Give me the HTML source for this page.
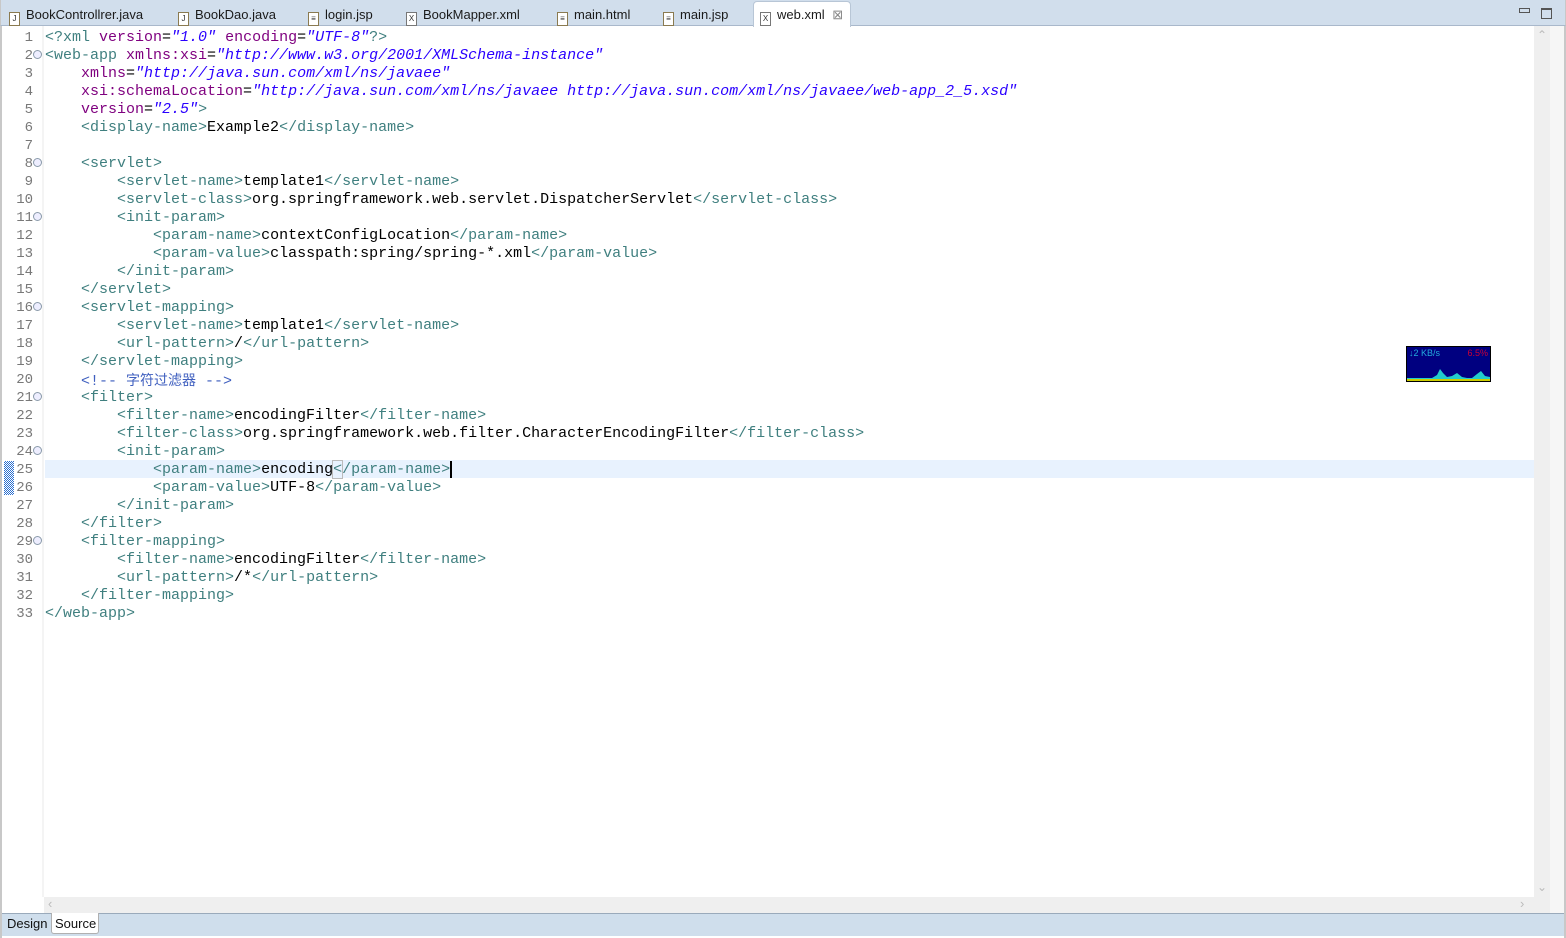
<!DOCTYPE html><html><head><meta charset="utf-8"><style>
body{margin:0;width:1566px;height:938px;background:#fff;position:relative;overflow:hidden;font-family:"Liberation Sans","Microsoft YaHei",sans-serif}
#tabs{position:absolute;left:0;top:0;width:1564px;height:25px;background:#d1deec;border-bottom:1px solid #a9b8cb;border-left:1px solid #c8c8c8;border-right:1px solid #c8c8c8}
.tab{position:absolute;top:7px;font-size:13px;color:#1a1a1a;white-space:nowrap}
.ic{display:inline-block;width:9px;height:12px;border:1px solid #8a7a50;background:#fff;margin-right:6px;vertical-align:-2px;font:8px "Liberation Sans";text-align:center;line-height:12px;color:#333}
.act{position:absolute;left:752px;top:1px;width:96px;height:25px;background:#fff;border:1px solid #b8c6d6;border-bottom:none;border-radius:4px 4px 0 0}
#code{position:absolute;left:0;top:29px;width:1534px;height:868px;font-family:"Liberation Mono",monospace;font-size:15px}
.l{position:absolute;left:45px;height:18px;line-height:18px;white-space:pre;color:#000}
.n{position:absolute;left:0;width:33px;text-align:right;height:18px;line-height:18px;color:#787878;font-family:"Liberation Mono",monospace;font-size:14px}
.f{position:absolute;left:33px;width:7px;height:7px;border:1px solid #8a9aaa;border-radius:50%;background:#eef}
.t{color:#3f7f7f}.a{color:#7f007f}.v{color:#2a00ff;font-style:italic}.c{color:#3f5fbf}
.cj{font-family:"Noto Sans CJK SC",sans-serif;font-size:14px}
</style></head><body>
<div id="tabs">
<div class="act"></div>
<div class="tab" style="left:8px"><span class="ic">J</span>BookControllrer.java</div>
<div class="tab" style="left:177px"><span class="ic">J</span>BookDao.java</div>
<div class="tab" style="left:307px"><span class="ic">≡</span>login.jsp</div>
<div class="tab" style="left:405px"><span class="ic" style="border-color:#777">X</span>BookMapper.xml</div>
<div class="tab" style="left:556px"><span class="ic">≡</span>main.html</div>
<div class="tab" style="left:662px"><span class="ic">≡</span>main.jsp</div>
<div class="tab" style="left:759px"><span class="ic" style="border-color:#777">X</span>web.xml <span style="color:#888;margin-left:4px">⊠</span></div>
<div style="position:absolute;left:1518px;top:8px;width:9px;height:3px;border:1px solid #555"></div>
<div style="position:absolute;left:1540px;top:8px;width:9px;height:8px;border:1px solid #555;border-top-width:2px"></div>
</div>
<div style="position:absolute;left:0;top:26px;width:2px;height:912px;background:#c8c8c8"></div>
<div style="position:absolute;left:1564px;top:26px;width:2px;height:912px;background:#c8c8c8"></div>
<div style="position:absolute;left:42px;top:26px;width:2px;height:871px;background:#f4f4f4"></div>
<div style="position:absolute;left:45px;top:460px;width:1489px;height:18px;background:#e8f2fe"></div>
<div style="position:absolute;left:4px;top:461px;width:10px;height:34px;background:repeating-conic-gradient(#2a6fd0 0 25%,#fff 0 50%) 0 0/2px 2px"></div>
<div style="position:absolute;left:1534px;top:26px;width:16px;height:871px;background:#efefef"></div>
<div style="position:absolute;left:1550px;top:26px;width:14px;height:887px;background:#f6f6f6"></div>
<div style="position:absolute;left:1537px;top:28px;color:#bbb;font-size:12px">⌃</div>
<div style="position:absolute;left:1537px;top:880px;color:#bbb;font-size:12px">⌄</div>
<div style="position:absolute;left:44px;top:897px;width:1506px;height:16px;background:#efefef"></div>
<div style="position:absolute;left:48px;top:896px;color:#bbb;font-size:13px">‹</div>
<div style="position:absolute;left:1520px;top:896px;color:#bbb;font-size:13px">›</div>
<div style="position:absolute;left:2px;top:913px;width:1562px;height:22px;background:#cfdeec;border-top:1px solid #9aaabb"></div>
<div style="position:absolute;left:7px;top:916px;font-size:13px;color:#111">Design</div>
<div style="position:absolute;left:51px;top:913px;width:46px;height:20px;background:#fff;border:1px solid #b0b0b0;border-top:none;border-radius:0 0 3px 3px"></div>
<div style="position:absolute;left:55px;top:916px;font-size:13px;color:#111">Source</div>
<div style="position:absolute;left:1406px;top:346px;width:83px;height:34px;background:#000080;border:1px solid #000">
<div style="position:absolute;left:2px;top:1px;font-size:9px;color:#2ad">↓2 KB/s</div>
<div style="position:absolute;right:2px;top:1px;font-size:9px;color:#c03">6.5%</div>
<svg style="position:absolute;left:0;top:0" width="83" height="34"><path d="M0 34 L0 31 L25 31 L30 28 L33 22 L36 26 L40 30 L45 29 L50 26 L55 30 L60 31 L65 31 L70 27 L74 24 L78 29 L83 30 L83 34Z" fill="#2cc"/><rect x="0" y="32" width="83" height="2" fill="#cc0"/></svg>
</div>
<div id="code">
<div class="n" style="top:0">1</div><div class="l" style="top:0"><span class="t">&lt;?xml </span><span class="a">version</span>=<span class="v">"1.0"</span> <span class="a">encoding</span>=<span class="v">"UTF-8"</span><span class="t">?&gt;</span></div>
<div class="n" style="top:18px">2</div><div class="f" style="top:21px"></div><div class="l" style="top:18px"><span class="t">&lt;web-app </span><span class="a">xmlns:xsi</span>=<span class="v">"http://www.w3.org/2001/XMLSchema-instance"</span></div>
<div class="n" style="top:36px">3</div><div class="l" style="top:36px">    <span class="a">xmlns</span>=<span class="v">"http://java.sun.com/xml/ns/javaee"</span></div>
<div class="n" style="top:54px">4</div><div class="l" style="top:54px">    <span class="a">xsi:schemaLocation</span>=<span class="v">"http://java.sun.com/xml/ns/javaee http://java.sun.com/xml/ns/javaee/web-app_2_5.xsd"</span></div>
<div class="n" style="top:72px">5</div><div class="l" style="top:72px">    <span class="a">version</span>=<span class="v">"2.5"</span><span class="t">&gt;</span></div>
<div class="n" style="top:90px">6</div><div class="l" style="top:90px">    <span class="t">&lt;display-name&gt;</span>Example2<span class="t">&lt;/display-name&gt;</span></div>
<div class="n" style="top:108px">7</div>
<div class="n" style="top:126px">8</div><div class="f" style="top:129px"></div><div class="l" style="top:126px">    <span class="t">&lt;servlet&gt;</span></div>
<div class="n" style="top:144px">9</div><div class="l" style="top:144px">        <span class="t">&lt;servlet-name&gt;</span>template1<span class="t">&lt;/servlet-name&gt;</span></div>
<div class="n" style="top:162px">10</div><div class="l" style="top:162px">        <span class="t">&lt;servlet-class&gt;</span>org.springframework.web.servlet.DispatcherServlet<span class="t">&lt;/servlet-class&gt;</span></div>
<div class="n" style="top:180px">11</div><div class="f" style="top:183px"></div><div class="l" style="top:180px">        <span class="t">&lt;init-param&gt;</span></div>
<div class="n" style="top:198px">12</div><div class="l" style="top:198px">            <span class="t">&lt;param-name&gt;</span>contextConfigLocation<span class="t">&lt;/param-name&gt;</span></div>
<div class="n" style="top:216px">13</div><div class="l" style="top:216px">            <span class="t">&lt;param-value&gt;</span>classpath:spring/spring-*.xml<span class="t">&lt;/param-value&gt;</span></div>
<div class="n" style="top:234px">14</div><div class="l" style="top:234px">        <span class="t">&lt;/init-param&gt;</span></div>
<div class="n" style="top:252px">15</div><div class="l" style="top:252px">    <span class="t">&lt;/servlet&gt;</span></div>
<div class="n" style="top:270px">16</div><div class="f" style="top:273px"></div><div class="l" style="top:270px">    <span class="t">&lt;servlet-mapping&gt;</span></div>
<div class="n" style="top:288px">17</div><div class="l" style="top:288px">        <span class="t">&lt;servlet-name&gt;</span>template1<span class="t">&lt;/servlet-name&gt;</span></div>
<div class="n" style="top:306px">18</div><div class="l" style="top:306px">        <span class="t">&lt;url-pattern&gt;</span>/<span class="t">&lt;/url-pattern&gt;</span></div>
<div class="n" style="top:324px">19</div><div class="l" style="top:324px">    <span class="t">&lt;/servlet-mapping&gt;</span></div>
<div class="n" style="top:342px">20</div><div class="l" style="top:342px">    <span class="c">&lt;!-- <span class="cj">字符过滤器</span> --&gt;</span></div>
<div class="n" style="top:360px">21</div><div class="f" style="top:363px"></div><div class="l" style="top:360px">    <span class="t">&lt;filter&gt;</span></div>
<div class="n" style="top:378px">22</div><div class="l" style="top:378px">        <span class="t">&lt;filter-name&gt;</span>encodingFilter<span class="t">&lt;/filter-name&gt;</span></div>
<div class="n" style="top:396px">23</div><div class="l" style="top:396px">        <span class="t">&lt;filter-class&gt;</span>org.springframework.web.filter.CharacterEncodingFilter<span class="t">&lt;/filter-class&gt;</span></div>
<div class="n" style="top:414px">24</div><div class="f" style="top:417px"></div><div class="l" style="top:414px">        <span class="t">&lt;init-param&gt;</span></div>
<div class="n" style="top:432px">25</div><div class="l" style="top:432px">            <span class="t">&lt;param-name&gt;</span>encoding<span class="t" style="outline:1px solid #bbb">&lt;</span><span class="t">/param-name&gt;</span><span style="border-left:2px solid #000"></span></div>
<div class="n" style="top:450px">26</div><div class="l" style="top:450px">            <span class="t">&lt;param-value&gt;</span>UTF-8<span class="t">&lt;/param-value&gt;</span></div>
<div class="n" style="top:468px">27</div><div class="l" style="top:468px">        <span class="t">&lt;/init-param&gt;</span></div>
<div class="n" style="top:486px">28</div><div class="l" style="top:486px">    <span class="t">&lt;/filter&gt;</span></div>
<div class="n" style="top:504px">29</div><div class="f" style="top:507px"></div><div class="l" style="top:504px">    <span class="t">&lt;filter-mapping&gt;</span></div>
<div class="n" style="top:522px">30</div><div class="l" style="top:522px">        <span class="t">&lt;filter-name&gt;</span>encodingFilter<span class="t">&lt;/filter-name&gt;</span></div>
<div class="n" style="top:540px">31</div><div class="l" style="top:540px">        <span class="t">&lt;url-pattern&gt;</span>/*<span class="t">&lt;/url-pattern&gt;</span></div>
<div class="n" style="top:558px">32</div><div class="l" style="top:558px">    <span class="t">&lt;/filter-mapping&gt;</span></div>
<div class="n" style="top:576px">33</div><div class="l" style="top:576px"><span class="t">&lt;/web-app&gt;</span></div>
</div>
</body></html>
